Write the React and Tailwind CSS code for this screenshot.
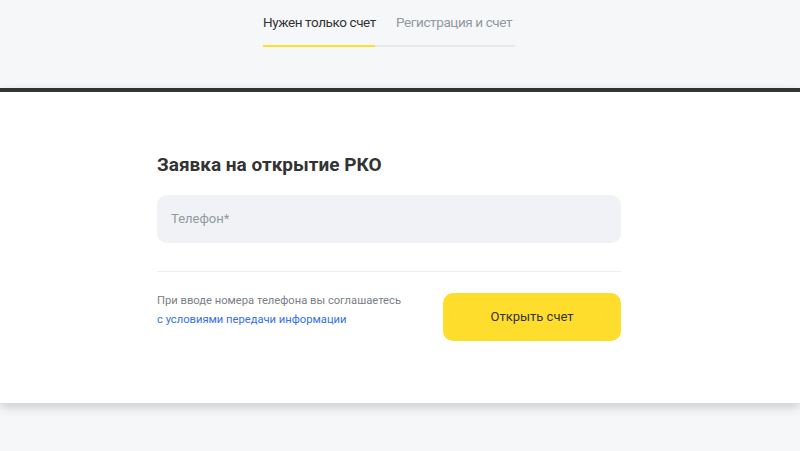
export default function App() {
  return (
    <div className="min-h-[451px] bg-[#f6f7f8] font-['Roboto','Liberation_Sans',sans-serif]">
      {/* tabs */}
      <div className="h-[88px] pt-[12px]">
        <div className="ml-[263px] flex w-[252px] border-b-2 border-[#e7e8ea] whitespace-nowrap">
          <button className="-mb-[2px] w-[112px] border-b-2 border-[#ffdd2d] pb-[13px] text-left text-[13.5px] leading-[20px] tracking-[-0.4px] text-[#333333]">
            Нужен только счет
          </button>
          <button className="ml-[21px] pb-[13px] text-left text-[13.5px] leading-[20px] tracking-[-0.4px] text-[#9299a2]">
            Регистрация и счет
          </button>
        </div>
      </div>

      {/* card */}
      <div className="border-t-4 border-[#333333] bg-white shadow-[0_4px_10px_rgba(0,0,0,0.18)]">
        <div className="ml-[157px] w-[464px] pt-[61px] pb-[62px]">
          <h2 className="text-[19px] font-bold leading-[24px] text-[#333333]">
            Заявка на открытие РКО
          </h2>
          <div className="mt-[18px] flex h-[48px] items-center rounded-[10px] bg-[#f1f2f5] px-[14px]">
            <span className="text-[13px] text-[#9299a2]">Телефон*</span>
          </div>
          <div className="mt-[28px] h-px bg-[#eceef0]" />
          <div className="mt-[19px] flex items-start justify-between">
            <div className="text-[11.2px] leading-[19px]">
              <p className="text-[#7a8087]">При вводе номера телефона вы соглашаетесь</p>
              <a className="text-[#336fee]">с условиями передачи информации</a>
            </div>
            <button className="mt-[2px] h-[48px] w-[178px] rounded-[10px] bg-[#ffdd2d] text-[13px] text-[#333333]">
              Открыть счет
            </button>
          </div>
        </div>
      </div>
    </div>
  );
}
